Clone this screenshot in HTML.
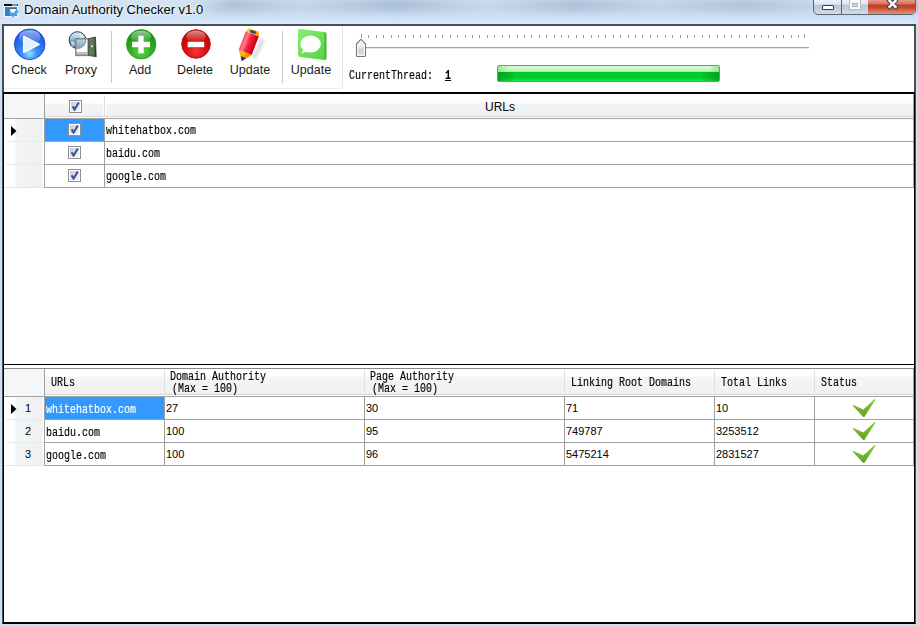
<!DOCTYPE html>
<html><head><meta charset="utf-8">
<style>
*{box-sizing:border-box;margin:0;padding:0}
html,body{width:918px;height:626px;overflow:hidden;background:#cfe0f2;font-family:"Liberation Sans",sans-serif}
.a{position:absolute}
#title{left:0;top:0;width:918px;height:24px;background:linear-gradient(to bottom,#d6e4f2 0,#cfdff0 6px,#cde0f4 12px,#d0e3f7 18px,#d6e7f8 23px,#e2eef9 24px)}
#streak{left:190px;top:-2px;width:740px;height:14px;background:linear-gradient(to right,rgba(140,165,195,0) 0,rgba(140,165,195,.55) 6%,rgba(160,182,210,.25) 15%,rgba(140,165,195,.6) 28%,rgba(165,185,212,.2) 40%,rgba(140,165,195,.55) 52%,rgba(160,182,210,.3) 63%,rgba(140,165,195,.5) 75%,rgba(165,185,212,.25) 85%,rgba(140,165,195,.45) 95%);filter:blur(4px)}
.ttl{font-size:13px;color:#000;text-shadow:0 0 6px #fff,0 0 3px #fff}
#client{left:2px;top:24px;width:914px;height:600px;border:2px solid #4a5056;border-bottom-color:#111;background:#fff}
.tb{font-size:12.5px;color:#1a1a1a;text-align:center;white-space:nowrap}
.mono{font-family:"Liberation Mono",monospace;font-size:12px;transform:scaleX(0.8333);transform-origin:0 0;-webkit-text-stroke:0.15px currentColor;color:#000;white-space:nowrap}
.sans{font-size:11px;color:#000;white-space:nowrap}
.hl{background:#a0a0a0}
</style></head><body>
<!-- title bar -->
<div id="title" class="a"></div>
<div id="streak" class="a"></div>
<svg class="a" style="left:2px;top:1px" width="22" height="20" viewBox="0 0 22 20">
  <rect x="1.5" y="3" width="15" height="13" fill="#f4f8fc" opacity=".8"/>
  <rect x="2" y="3" width="14" height="2" fill="#150c08"/>
  <rect x="10" y="3" width="5.5" height="2" fill="#5aa0d8"/>
  <rect x="3" y="6" width="12" height="9" fill="#3a90d0"/>
  <rect x="3" y="6" width="4" height="9" fill="#2f80c0"/>
  <path d="M8 7 L14 7 L13.5 11.8 L8.5 11.8 Z" fill="#fff"/>
  <rect x="8" y="7" width="6" height="0.8" fill="#333"/>
  <path d="M7.3 12.8 L11.2 16.6 L17 10.2 L14.5 8.6 L11 12.8 L9.3 11.3 Z" fill="#4aa6e0"/>
</svg>
<div class="a ttl" style="left:24px;top:2px">Domain Authority Checker v1.0</div>
<!-- window buttons -->
<div class="a" style="left:813px;top:-2px;width:103px;height:17px;border:1px solid #5a6470;border-radius:0 0 5px 5px;overflow:hidden;background:linear-gradient(#edf2f7 0,#dfe7f0 5px,#b8c8d8 6px,#c0cedd 10px,#d3dee9 15px)">
  <div class="a" style="left:27px;top:0;width:1px;height:16px;background:#5b6570"></div>
  <div class="a" style="left:54px;top:0;width:48px;height:16px;background:linear-gradient(#e8a595 0,#d8705c 5px,#c23a20 6px,#c84a30 9px,#e08a70 14px)"></div>
</div>
<div class="a" style="left:822px;top:5px;width:12px;height:5px;border:1px solid #333b45;background:#fff;border-radius:1px"></div>
<div class="a" style="left:849px;top:-1px;width:12px;height:11px;border:1px solid #b4bac2;background:#f2f4f6"></div>
<div class="a" style="left:850px;top:0px;width:10px;height:9px;border:1px solid #fff;"></div>
<div class="a" style="left:852px;top:3px;width:6px;height:4px;border:1px solid #b0b6bd;background:#c6d4e2"></div>
<svg class="a" style="left:885px;top:-2px" width="15" height="13" viewBox="0 0 15 13"><path d="M4.5 2.8 L10.5 8.8 M10.5 2.8 L4.5 8.8" stroke="#3e4652" stroke-width="4.4" stroke-linecap="square"/><path d="M4.5 2.8 L10.5 8.8 M10.5 2.8 L4.5 8.8" stroke="#fff" stroke-width="2.4" stroke-linecap="square"/></svg>
<div id="client" class="a"></div>

<!-- toolbar -->
<div class="a" style="left:342px;top:26px;width:1px;height:61px;background:#e6e6e6"></div>
<div class="a" style="left:4px;top:88px;width:338px;height:1px;background:#eeeeee"></div>
<div class="a hl" style="left:111px;top:31px;width:1px;height:52px;background:#c8c8c8"></div>
<div class="a hl" style="left:282px;top:31px;width:1px;height:52px;background:#c8c8c8"></div>

<!-- Check icon -->
<svg class="a" style="left:13px;top:28px" width="34" height="34" viewBox="0 0 34 34">
  <defs>
    <radialGradient id="gb" cx="50%" cy="80%" r="70%"><stop offset="0" stop-color="#8fe6ff"/><stop offset=".35" stop-color="#3b8ef5"/><stop offset="1" stop-color="#1e55e0"/></radialGradient>
    <linearGradient id="gbh" x1="0" y1="0" x2="0" y2="1"><stop offset="0" stop-color="#fff" stop-opacity=".55"/><stop offset="1" stop-color="#fff" stop-opacity="0"/></linearGradient>
  </defs>
  <circle cx="16.7" cy="16.3" r="15.3" fill="url(#gb)" stroke="#1d4fd8" stroke-width="1"/>
  <ellipse cx="16.7" cy="9" rx="11" ry="7" fill="url(#gbh)"/>
  <path d="M10.8 8.4 L26.2 16.3 L10.8 24.4 Z" fill="#e2f0ff" stroke="#fff" stroke-width="1.4" stroke-linejoin="round"/>
</svg>
<div class="a tb" style="left:4px;top:63px;width:50px">Check</div>

<!-- Proxy icon -->
<svg class="a" style="left:64px;top:28px" width="36" height="32" viewBox="0 0 36 32">
  <defs>
    <linearGradient id="gg" x1="0" y1="0" x2="0" y2="1"><stop offset="0" stop-color="#e0ecf7"/><stop offset=".35" stop-color="#b0cbe5"/><stop offset=".62" stop-color="#5f8fc0"/><stop offset="1" stop-color="#24507e"/></linearGradient>
    <linearGradient id="gdoor" x1="0" y1="0" x2="1" y2="0"><stop offset="0" stop-color="#6d8766"/><stop offset=".7" stop-color="#56704e"/><stop offset="1" stop-color="#1e261c"/></linearGradient>
  </defs>
  <circle cx="13.5" cy="12.1" r="8.4" fill="url(#gg)" stroke="#2c3c4e" stroke-width="1"/>
  <path d="M7 14 Q9 12 11 15 L10 19 Q7 18 7 14 Z" fill="#e8f0f8" opacity=".7"/>
  <path d="M15 7 Q19 6 20 10 L17 11 Z" fill="#fff" opacity=".6"/>
  <rect x="11.8" y="10.8" width="12.4" height="16.6" fill="#fff" fill-opacity=".45"/>
  <rect x="12.5" y="24" width="11" height="3" fill="#bdbdbd"/>
  <rect x="11.8" y="10.8" width="12.4" height="16.6" fill="none" stroke="#7d8a74" stroke-width="1.5"/>
  <path d="M24.8 10.5 L31.5 9 L32.2 28.8 L24.8 27.5 Z" fill="url(#gdoor)" stroke="#263024" stroke-width=".7"/>
  <rect x="27" y="17.2" width="2" height="2" fill="#d0dcc8"/>
</svg>
<div class="a tb" style="left:56px;top:63px;width:50px">Proxy</div>

<!-- Add icon -->
<svg class="a" style="left:124px;top:28px" width="34" height="34" viewBox="0 0 34 34">
  <defs>
    <radialGradient id="ggr" cx="50%" cy="75%" r="70%"><stop offset="0" stop-color="#5fd84a"/><stop offset=".5" stop-color="#2fae25"/><stop offset="1" stop-color="#1a8a14"/></radialGradient>
  </defs>
  <circle cx="17.2" cy="16.3" r="14.7" fill="url(#ggr)" stroke="#38a030" stroke-width="1"/>
  <ellipse cx="17" cy="8.5" rx="10" ry="6" fill="url(#gbh)"/>
  <path d="M14.3 7.8 H19.7 V13.8 H26 V19.2 H19.7 V25.2 H14.3 V19.2 H8 V13.8 H14.3 Z" fill="#fff"/>
</svg>
<div class="a tb" style="left:115px;top:63px;width:50px">Add</div>

<!-- Delete icon -->
<svg class="a" style="left:179px;top:28px" width="34" height="34" viewBox="0 0 34 34">
  <defs>
    <radialGradient id="grd" cx="50%" cy="75%" r="70%"><stop offset="0" stop-color="#f03a3a"/><stop offset=".5" stop-color="#d80f0f"/><stop offset="1" stop-color="#b30000"/></radialGradient>
  </defs>
  <circle cx="17" cy="16" r="14.3" fill="url(#grd)" stroke="#c01818" stroke-width="1"/>
  <ellipse cx="17" cy="8.5" rx="10" ry="6" fill="url(#gbh)"/>
  <rect x="8.7" y="13.8" width="16.5" height="5.4" fill="#fff"/>
</svg>
<div class="a tb" style="left:170px;top:63px;width:50px">Delete</div>

<!-- Pencil icon -->
<svg class="a" style="left:232px;top:26px" width="38" height="38" viewBox="0 0 38 38">
  <defs>
    <filter id="blr" x="-50%" y="-50%" width="200%" height="200%"><feGaussianBlur stdDeviation="1.6"/></filter>
    <linearGradient id="gpb" x1="0" y1="0" x2="1" y2="0"><stop offset="0" stop-color="#ff5060"/><stop offset=".25" stop-color="#ff7a86"/><stop offset=".45" stop-color="#f23040"/><stop offset=".7" stop-color="#e8102a"/><stop offset="1" stop-color="#c00018"/></linearGradient>
  </defs>
  <path d="M20 33 L29 12 L33 14 L24 33 Z" fill="#bbb" opacity=".55" filter="url(#blr)"/>
  <g transform="rotate(21 16 19)">
    <rect x="9" y="7" width="14" height="20" fill="url(#gpb)"/>
    <path d="M9 7 L11 3 L21 3 L23 7 Z" fill="#ffcc00"/>
    <path d="M17 3 L21 3 L23 7 L19 7 Z" fill="#ff9a00"/>
    <ellipse cx="16" cy="5" rx="3.2" ry="1.6" fill="#2a4aa8"/>
    <path d="M9 27 H23 L19 32 H13 Z" fill="#ffb800"/>
    <path d="M17 27 H23 L19 32 H16 Z" fill="#ff8a00"/>
    <path d="M13 32 H19 L16 36.5 Z" fill="#2c2c3a"/>
  </g>
</svg>
<div class="a tb" style="left:225px;top:63px;width:50px">Update</div>

<!-- Message icon -->
<svg class="a" style="left:296px;top:28px" width="32" height="34" viewBox="0 0 32 34">
  <defs>
    <linearGradient id="gm" x1="0" y1="0" x2="1" y2="1"><stop offset="0" stop-color="#88ee70"/><stop offset="1" stop-color="#58d042"/></linearGradient>
  </defs>
  <path d="M4 1 L28 4 Q30 4.3 30 6.5 L30 30 Q30 32.5 28 32 L4 29 Q2 28.7 2 26.5 L2 3 Q2 0.8 4 1 Z" fill="url(#gm)"/>
  <path d="M28.5 4 L30.5 5 L30.5 31 L28.5 32 Z" fill="#46b834"/>
  <ellipse cx="14.6" cy="16" rx="10.3" ry="8.6" fill="#fff"/>
  <path d="M8 21 L5 25.5 L12 23 Z" fill="#fff"/>
</svg>
<div class="a tb" style="left:286px;top:63px;width:50px">Update</div>

<!-- trackbar -->
<div id="ticks" class="a" style="left:0;top:0"></div>
<div class="a" style="left:358px;top:47px;width:451px;height:1px;background:#a3a3a3"></div>
<div class="a" style="left:358px;top:48px;width:451px;height:1px;background:#e2e8e8"></div>
<svg class="a" style="left:355px;top:38px" width="12" height="20" viewBox="0 0 12 20">
  <defs><linearGradient id="gt" x1="0" y1="0" x2="0" y2="1"><stop offset="0" stop-color="#f2f2f2"/><stop offset=".45" stop-color="#ececec"/><stop offset=".5" stop-color="#d9d9d9"/><stop offset="1" stop-color="#d4d4d4"/></linearGradient></defs>
  <path d="M1.5 6 L6 1.3 L10.5 6 L10.5 17.5 Q10.5 18.5 9.5 18.5 L2.5 18.5 Q1.5 18.5 1.5 17.5 Z" fill="url(#gt)" stroke="#777" stroke-width="1.1"/>
  <path d="M2.6 6.4 L6 2.8 L9.4 6.4 L9.4 17.4 L2.6 17.4 Z" fill="none" stroke="#fff" stroke-width=".9"/>
</svg>
<div class="a mono" style="left:349px;top:69px">CurrentThread:</div>
<div class="a mono" style="left:445px;top:69px;font-weight:bold;text-decoration:underline">1</div>

<!-- progress -->
<div class="a" style="left:497px;top:65px;width:223px;height:17px;border:1px solid #8c8890;border-radius:2px;background:linear-gradient(#d4fcd4 0,#c4f6c4 30%,#a0e6a6 40%,#00c824 41%,#00d02a 80%,#18e83a 100%)"></div>

<div class="a" style="left:498px;top:72px;width:221px;height:9px;background:linear-gradient(to right,rgba(0,80,0,.35) 0,rgba(0,80,0,0) 18px,rgba(0,80,0,0) 203px,rgba(0,80,0,.35) 221px)"></div>
<div class="a" style="left:498px;top:66px;width:221px;height:6px;background:linear-gradient(to right,rgba(90,220,90,.5) 0,rgba(90,220,90,0) 10px,rgba(90,220,90,0) 211px,rgba(90,220,90,.5) 221px)"></div>
<!-- grid 1 -->
<div class="a" style="left:3px;top:92px;width:912px;height:273px;border:1px solid #000;border-top:2px solid #000;background:#fff"></div>
<!-- header row -->
<div class="a" style="left:4px;top:94px;width:40px;height:24px;background:#f5f6f8"></div>
<div class="a" style="left:45px;top:94px;width:868px;height:24px;background:linear-gradient(#fff 0,#fff 9px,#f3f4f6 10px,#eef0f2 22px,#d6d6d6 22px,#d6d6d6 23px,#fff 23px)"></div>
<div class="a" style="left:4px;top:118px;width:909px;height:1px;background:#a0a0a0"></div>
<div class="a" style="left:44px;top:94px;width:1px;height:94px;background:#a0a0a0"></div>
<div class="a" style="left:103px;top:96px;width:3px;height:20px;background:linear-gradient(to right,#fff 0,#fff 1px,#dcdcdc 1px,#dcdcdc 2px,#fff 2px)"></div>
<div class="a" style="left:104px;top:119px;width:1px;height:69px;background:#a0a0a0"></div>
<div class="a" style="left:913px;top:94px;width:1px;height:94px;background:#a0a0a0"></div>
<!-- row header gradient -->
<div class="a" style="left:4px;top:119px;width:40px;height:69px;background:linear-gradient(to right,#fff 0,#fff 11px,#f3f4f6 12px,#eff0f2 38px,#fff 39px)"></div>
<div class="a" style="left:6px;top:141px;width:37px;height:1px;background:#eaeaea"></div>
<div class="a" style="left:6px;top:164px;width:37px;height:1px;background:#eaeaea"></div>
<div class="a" style="left:4px;top:187px;width:40px;height:1px;background:#e6e6e6"></div>
<div class="a" style="left:45px;top:141px;width:869px;height:1px;background:#a0a0a0"></div>
<div class="a" style="left:45px;top:164px;width:869px;height:1px;background:#a0a0a0"></div>
<div class="a" style="left:45px;top:187px;width:869px;height:1px;background:#a0a0a0"></div>
<div class="a" style="left:45px;top:119px;width:59px;height:22px;background:#3399ff"></div>
<svg class="a" style="left:11px;top:126px" width="6" height="10" viewBox="0 0 6 10"><path d="M0 0 L5.5 5 L0 10 Z" fill="#000"/></svg>
<div class="a" style="left:470px;top:100px;width:60px;text-align:center;font-size:12px;color:#000">URLs</div>
<div id="cbs"></div>
<div class="a mono" style="left:106px;top:124px">whitehatbox.com</div>
<div class="a mono" style="left:106px;top:147px">baidu.com</div>
<div class="a mono" style="left:106px;top:170px">google.com</div>

<!-- grid 2 -->
<div class="a" style="left:3px;top:365px;width:912px;height:259px;border-left:1px solid #000;border-right:1px solid #000;border-bottom:2px solid #000;background:#fff"></div>
<div class="a" style="left:4px;top:368px;width:910px;height:1px;background:#8a8a8a"></div>
<div class="a" style="left:4px;top:369px;width:40px;height:27px;background:#f5f6f8"></div>
<div class="a" style="left:45px;top:369px;width:868px;height:27px;background:linear-gradient(#fff 0,#fff 7px,#f4f5f7 8px,#eff1f3 25px,#d6d6d6 25px,#d6d6d6 26px,#fff 26px)"></div>
<div class="a" style="left:4px;top:396px;width:909px;height:1px;background:#a0a0a0"></div>
<div class="a" style="left:44px;top:369px;width:1px;height:97px;background:#a0a0a0"></div>
<div id="g2cols"></div>
<div class="a" style="left:4px;top:397px;width:40px;height:69px;background:linear-gradient(to right,#fff 0,#fff 11px,#f3f4f6 12px,#eff0f2 38px,#fff 39px)"></div>
<div class="a" style="left:6px;top:419px;width:37px;height:1px;background:#eaeaea"></div>
<div class="a" style="left:6px;top:442px;width:37px;height:1px;background:#eaeaea"></div>
<div class="a" style="left:4px;top:465px;width:40px;height:1px;background:#e6e6e6"></div>
<div class="a" style="left:45px;top:419px;width:869px;height:1px;background:#a0a0a0"></div>
<div class="a" style="left:45px;top:442px;width:869px;height:1px;background:#a0a0a0"></div>
<div class="a" style="left:45px;top:465px;width:869px;height:1px;background:#a0a0a0"></div>
<div class="a" style="left:45px;top:397px;width:119px;height:22px;background:#3399ff"></div>
<svg class="a" style="left:11px;top:404px" width="6" height="10" viewBox="0 0 6 10"><path d="M0 0 L5.5 5 L0 10 Z" fill="#000"/></svg>
<div class="a sans" style="left:25px;top:402px">1</div>
<div class="a sans" style="left:25px;top:425px">2</div>
<div class="a sans" style="left:25px;top:448px">3</div>

<div class="a mono" style="left:51px;top:376px">URLs</div>
<div class="a mono" style="left:170px;top:371px;line-height:12px">Domain Authority<br><span style="padding-left:2.4px">(Max = 100)</span></div>
<div class="a mono" style="left:370px;top:371px;line-height:12px">Page Authority<br><span style="padding-left:2.4px">(Max = 100)</span></div>
<div class="a mono" style="left:571px;top:376px">Linking Root Domains</div>
<div class="a mono" style="left:721px;top:376px">Total Links</div>
<div class="a mono" style="left:821px;top:376px">Status</div>

<div class="a mono" style="left:46px;top:403px;color:#fff">whitehatbox.com</div>
<div class="a mono" style="left:46px;top:426px">baidu.com</div>
<div class="a mono" style="left:46px;top:449px">google.com</div>
<div class="a sans" style="left:166px;top:402px">27</div>
<div class="a sans" style="left:166px;top:425px">100</div>
<div class="a sans" style="left:166px;top:448px">100</div>
<div class="a sans" style="left:366px;top:402px">30</div>
<div class="a sans" style="left:366px;top:425px">95</div>
<div class="a sans" style="left:366px;top:448px">96</div>
<div class="a sans" style="left:566px;top:402px">71</div>
<div class="a sans" style="left:566px;top:425px">749787</div>
<div class="a sans" style="left:566px;top:448px">5475214</div>
<div class="a sans" style="left:716px;top:402px">10</div>
<div class="a sans" style="left:716px;top:425px">3253512</div>
<div class="a sans" style="left:716px;top:448px">2831527</div>
<div id="checks"></div>

<script>
// ticks
(function(){
  var h='';
  for(var i=0;i<=60;i++){
    var x=(i==60)?804:Math.floor(361.4+i*7.41);
    var big=(i==0||i==60);
    h+='<div class="a" style="left:'+x+'px;top:'+(big?34:35)+'px;width:1px;height:'+(big?4:3)+'px;background:#9a9a9a"></div>';
  }
  document.getElementById('ticks').innerHTML=h;
  // checkboxes
  var cb=function(x,y){return '<svg class="a" style="left:'+x+'px;top:'+y+'px" width="13" height="13" viewBox="0 0 13 13"><defs><linearGradient id="gcb" x1="0" y1="0" x2="1" y2="1"><stop offset="0" stop-color="#c8ccd2"/><stop offset="1" stop-color="#f4f5f6"/></linearGradient></defs><rect x=".5" y=".5" width="12" height="12" fill="#fff" stroke="#8e8f8f"/><rect x="2" y="2" width="9" height="9" fill="url(#gcb)"/><path d="M3.6 6.2 L5.6 9.6 L9.8 2.6" fill="none" stroke="#34509e" stroke-width="2"/></svg>';};
  document.getElementById('cbs').innerHTML=cb(69,100)+cb(68,123)+cb(68,146)+cb(68,169);
  // grid 2 column lines
  var cols=[164,364,564,714,814], g='';
  cols.forEach(function(x){
    g+='<div class="a" style="left:'+x+'px;top:370px;width:1px;height:25px;background:#e0e0e0"></div>';
    g+='<div class="a" style="left:'+x+'px;top:397px;width:1px;height:69px;background:#a0a0a0"></div>';
  });
  g+='<div class="a" style="left:913px;top:369px;width:1px;height:97px;background:#a0a0a0"></div>';
  document.getElementById('g2cols').innerHTML=g;
  var ck=function(y){return '<svg class="a" style="left:852px;top:'+y+'px" width="24" height="19" viewBox="0 0 24 19"><defs><linearGradient id="gck" x1="0" y1="0" x2="0" y2="1"><stop offset="0" stop-color="#86cc38"/><stop offset="1" stop-color="#5fa41c"/></linearGradient></defs><path d="M0.6 6.4 L1.5 6 L11.3 10.6 L22.6 0.1 L23.4 0.8 L12.4 18 L11.2 18 Z" fill="url(#gck)"/></svg>';};
  document.getElementById('checks').innerHTML=ck(399)+ck(422)+ck(445);
})();
</script>
</body></html>
